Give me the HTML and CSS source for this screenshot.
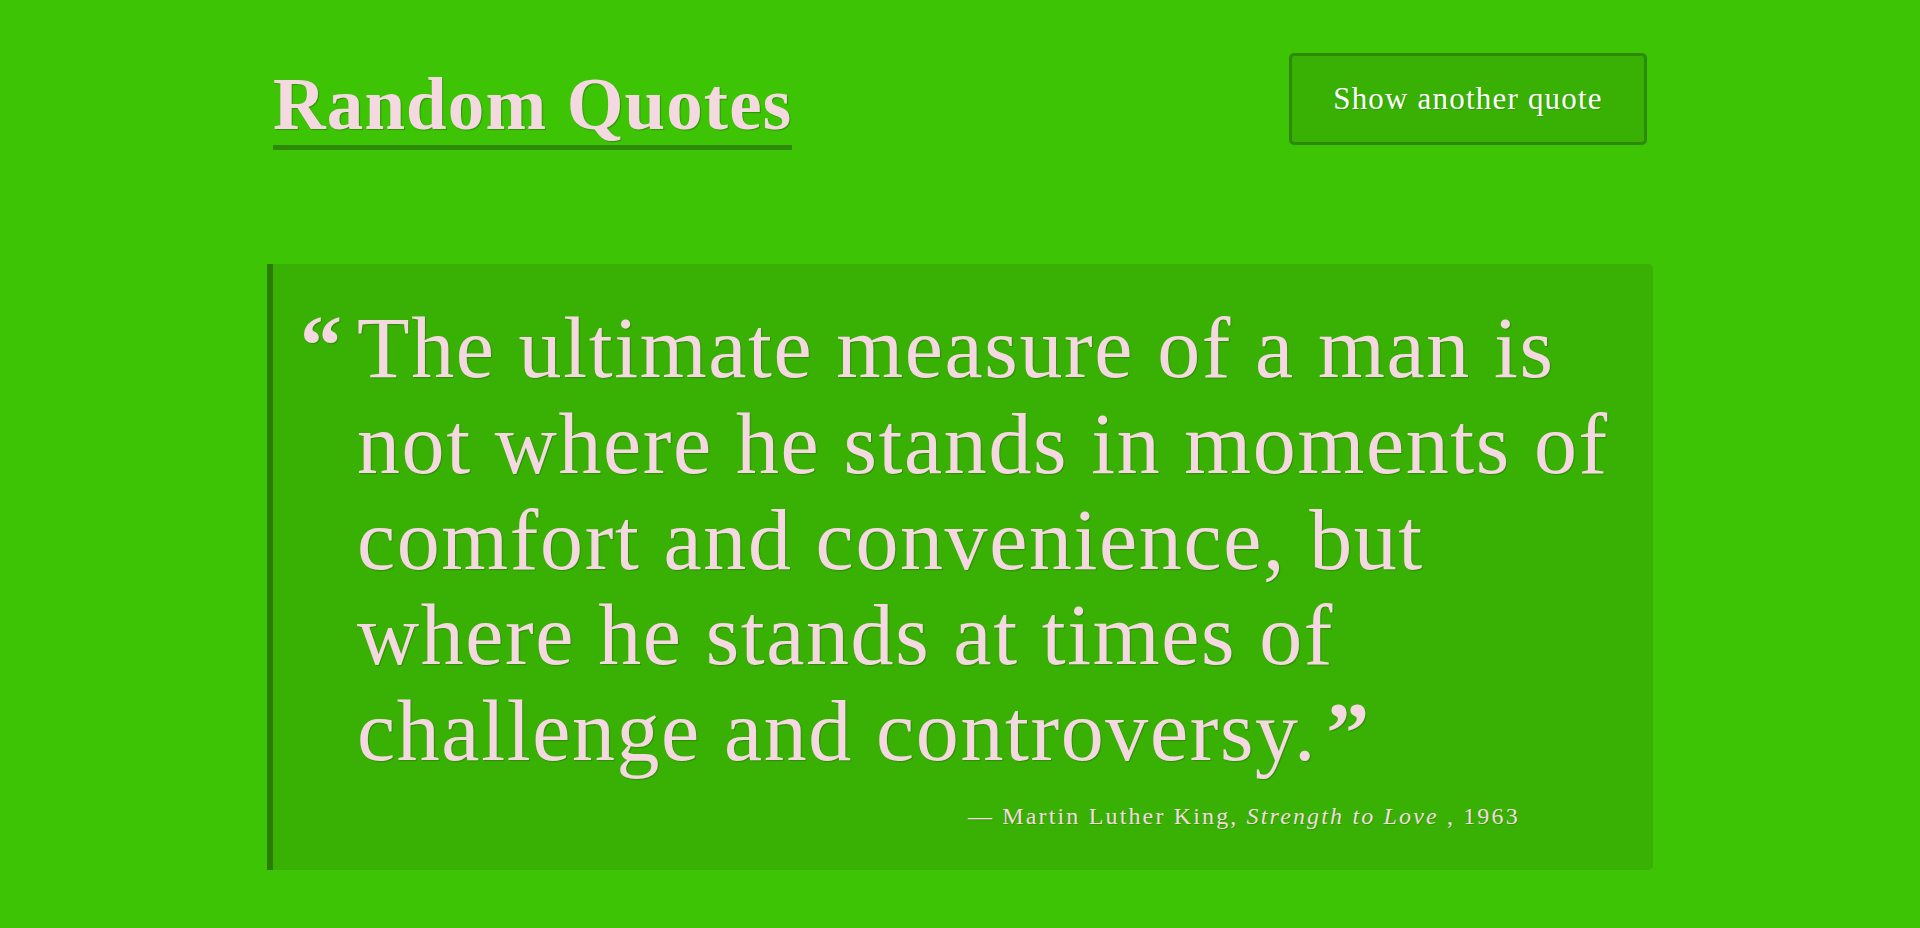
FILE: index.html
```html
<!DOCTYPE html>
<html lang="en">
<head>
<meta charset="utf-8">
<title>Random Quotes</title>
<link rel="stylesheet" href="styles.css">
</head>
<body>
<div class="page">
  <header class="header">
    <h1 class="title">Random Quotes</h1>
    <button class="btn" type="button">Show another quote</button>
  </header>
  <blockquote class="quote">
    <span class="open-mark">&ldquo;</span>
    <div class="quote-body">
      <p class="quote-text">The ultimate measure of a man is<br>not where he stands in moments of<br>comfort and convenience, but<br>where he stands at times of<br>challenge and controversy.<span class="close-mark">&rdquo;</span></p>
      <p class="cite">&mdash; Martin Luther King, <em>Strength to Love</em> , 1963</p>
    </div>
  </blockquote>
</div>
</body>
</html>
```

FILE: styles.css
```css
html, body {
  margin: 0;
  padding: 0;
}
body {
  background: #3cc405;
  font-family: "Liberation Serif", "DejaVu Serif", serif;
  color: #f5d9e0;
  min-height: 928px;
}
.page {
  width: 1386px;
  margin: 0 auto;
}
.header {
  display: flex;
  justify-content: space-between;
  align-items: flex-start;
  padding: 53px 6px 0 6px;
}
.title {
  margin: 12px 0 0 0;
  font-size: 73px;
  line-height: 80px;
  font-weight: 700;
  letter-spacing: 1.1px;
  border-bottom: 5px solid #2d8a04;
  text-shadow: 1px 1px 1px rgba(0, 0, 0, 0.25);
}
.btn {
  width: 358px;
  height: 92px;
  background: #38b004;
  border: 3px solid #2d8a04;
  border-radius: 5px;
  color: #ffffff;
  font-family: "Liberation Serif", "DejaVu Serif", serif;
  font-size: 31px;
  letter-spacing: 1.2px;
  padding: 0;
  text-shadow: 1px 1px 0 rgba(0, 0, 0, 0.15);
}
.quote {
  margin: 114px 0 0 0;
  background: #38b004;
  border-left: 6px solid #2a7d03;
  border-radius: 0 5px 5px 0;
  display: flex;
  align-items: flex-start;
  padding: 37px 30px 38px 27px;
}
.open-mark {
  margin-top: 5px;
  font-size: 84px;
  font-weight: 700;
  line-height: 80px;
  width: 57px;
  flex: none;
  text-shadow: 1px 1px 1px rgba(0, 0, 0, 0.2);
}
.quote-body {
  flex: 1;
}
.quote-text {
  margin: 0;
  font-size: 86px;
  line-height: 95.75px;
  letter-spacing: 1.6px;
  text-shadow: 1px 1px 1px rgba(0, 0, 0, 0.2);
}
.close-mark {
  margin-left: 9px;
  font-weight: 700;
  font-size: 86px;
  line-height: 0;
  letter-spacing: 0;
  vertical-align: -2px;
}
.cite {
  margin: 20px 0 0 611px;
  font-size: 24px;
  line-height: 32px;
  letter-spacing: 2.15px;
  text-shadow: 1px 1px 0 rgba(0, 0, 0, 0.15);
}
```
